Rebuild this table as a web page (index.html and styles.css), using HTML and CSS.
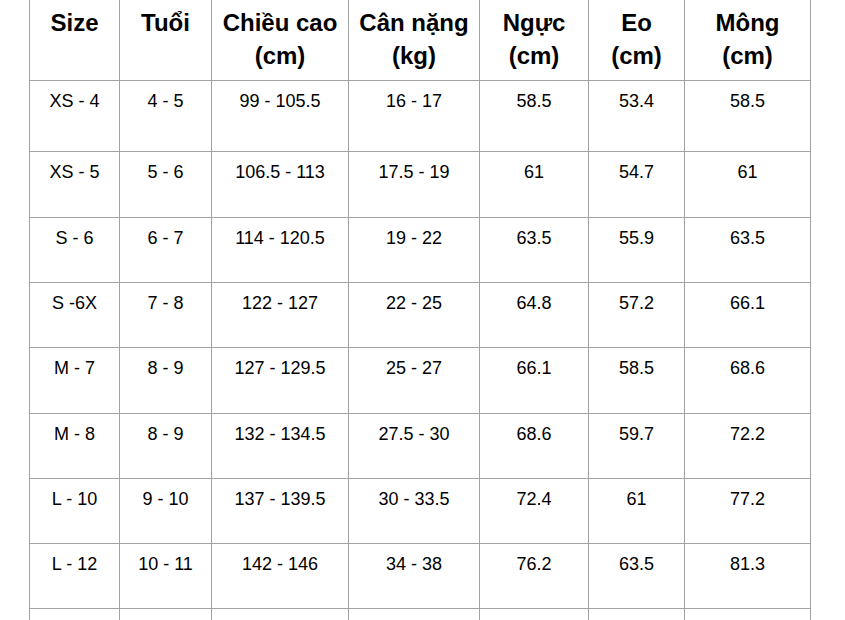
FILE: index.html
```html
<!DOCTYPE html>
<html lang="vi">
<head>
<meta charset="utf-8">
<title>Bảng size</title>
<link rel="stylesheet" href="styles.css">
</head>
<body>
<table class="size-table">
  <colgroup>
    <col class="c1"><col class="c2"><col class="c3"><col class="c4"><col class="c5"><col class="c6"><col class="c7">
  </colgroup>
  <thead>
    <tr class="head">
      <th>Size</th>
      <th>Tuổi</th>
      <th>Chiều cao<br>(cm)</th>
      <th>Cân nặng<br>(kg)</th>
      <th>Ngực<br>(cm)</th>
      <th>Eo<br>(cm)</th>
      <th>Mông<br>(cm)</th>
    </tr>
  </thead>
  <tbody>
    <tr class="first"><td>XS - 4</td><td>4 - 5</td><td>99 - 105.5</td><td>16 - 17</td><td>58.5</td><td>53.4</td><td>58.5</td></tr>
    <tr><td>XS - 5</td><td>5 - 6</td><td>106.5 - 113</td><td>17.5 - 19</td><td>61</td><td>54.7</td><td>61</td></tr>
    <tr><td>S - 6</td><td>6 - 7</td><td>114 - 120.5</td><td>19 - 22</td><td>63.5</td><td>55.9</td><td>63.5</td></tr>
    <tr><td>S -6X</td><td>7 - 8</td><td>122 - 127</td><td>22 - 25</td><td>64.8</td><td>57.2</td><td>66.1</td></tr>
    <tr><td>M - 7</td><td>8 - 9</td><td>127 - 129.5</td><td>25 - 27</td><td>66.1</td><td>58.5</td><td>68.6</td></tr>
    <tr><td>M - 8</td><td>8 - 9</td><td>132 - 134.5</td><td>27.5 - 30</td><td>68.6</td><td>59.7</td><td>72.2</td></tr>
    <tr><td>L - 10</td><td>9 - 10</td><td>137 - 139.5</td><td>30 - 33.5</td><td>72.4</td><td>61</td><td>77.2</td></tr>
    <tr><td>L - 12</td><td>10 - 11</td><td>142 - 146</td><td>34 - 38</td><td>76.2</td><td>63.5</td><td>81.3</td></tr>
    <tr><td></td><td></td><td></td><td></td><td></td><td></td><td></td></tr>
  </tbody>
</table>
</body>
</html>
```

FILE: styles.css
```css
html, body {
  margin: 0;
  padding: 0;
  background: #ffffff;
}

body {
  font-family: "Liberation Sans", Arial, sans-serif;
  color: #000000;
  overflow: hidden;
}

.size-table {
  border-collapse: collapse;
  table-layout: fixed;
  width: 781px;
  margin: -4px 0 0 29px;
}

.c1 { width: 90px; }
.c2 { width: 92px; }
.c3 { width: 137px; }
.c4 { width: 131px; }
.c5 { width: 109px; }
.c6 { width: 96px; }
.c7 { width: 126px; }

.size-table th,
.size-table td {
  border: 1px solid #a3a3a3;
  text-align: center;
  vertical-align: top;
  padding: 0 2px;
}

.size-table th {
  font-weight: bold;
  font-size: 24px;
  line-height: 32.6px;
  padding-top: 10px;
  padding-bottom: 8px;
}

.size-table td {
  font-size: 18px;
  line-height: 20.7px;
  padding-top: 10px;
  height: 55.33px;
  box-sizing: border-box;
}

.size-table tbody tr {
  height: 65.33px;
}

.size-table tbody tr.first {
  height: 71px;
}
```
